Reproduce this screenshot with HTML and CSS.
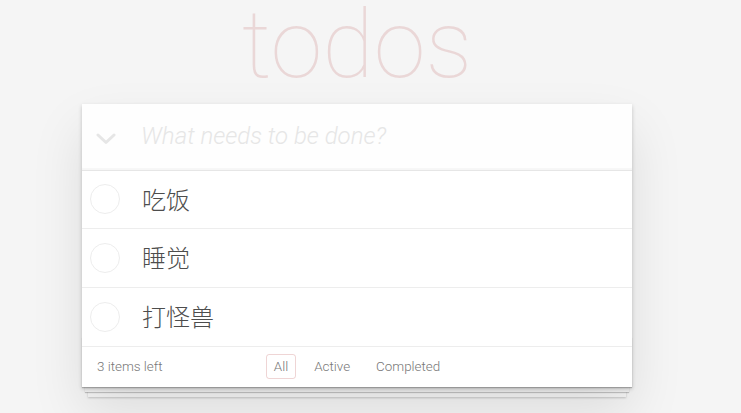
FILE: index.html
```html
<!DOCTYPE html>
<html lang="zh">
<head>
    <meta charset="UTF-8">
    <meta name="viewport" content="width=device-width, initial-scale=1.0">
    <title>Todos</title>
    <link rel="stylesheet" href="styles.css">
</head>
<body>
    <section class="todoapp">
        <h1 class="title">todos</h1>

        <div class="card">
            <div class="new-row">
                <span class="toggle-all">
                    <svg width="20" height="12" viewBox="0 0 20 12">
                        <polyline points="2,2 10,9.5 18,2" fill="none" stroke="#e6e6e6" stroke-width="3" stroke-linecap="round" stroke-linejoin="round"/>
                    </svg>
                </span>
                <input class="new-todo" type="text" placeholder="What needs to be done?">
            </div>

            <ul class="todo-list">
                <li class="todo"><span class="check"></span><label>吃饭</label></li>
                <li class="todo"><span class="check"></span><label>睡觉</label></li>
                <li class="todo"><span class="check"></span><label>打怪兽</label></li>
            </ul>

            <footer class="footer">
                <span class="todo-count">3 items left</span>
                <ul class="filters">
                    <li><a class="selected" href="#/">All</a></li>
                    <li><a href="#/active">Active</a></li>
                    <li><a href="#/completed">Completed</a></li>
                </ul>
                <span></span>
            </footer>
        </div>
    </section>
</body>
</html>
```

FILE: styles.css
```css
body {
    margin: 0;
    padding: 0;
    background-color: #f5f5f5;
    color: #4d4d4d;
    font-family: "Helvetica Neue", Roboto, "Noto Sans CJK SC", sans-serif;
    font-size: 14px;
    font-weight: 300;
    line-height: 1.4em;
}

.todoapp {
    width: 550px;
    margin: 0 0 40px 82px;
}

.title {
    margin: 0 0 14px 0;
    font-size: 94px;
    font-weight: 100;
    line-height: 90px;
    text-align: center;
    color: rgba(175, 47, 47, 0.15);
}

.card {
    position: relative;
    background: #fff;
    box-shadow: 0 2px 4px 0 rgba(0, 0, 0, 0.2),
                0 25px 50px 0 rgba(0, 0, 0, 0.1);
}

.new-row {
    display: flex;
    align-items: center;
    background: rgba(0, 0, 0, 0.003);
    box-shadow: inset 0 -2px 1px rgba(0, 0, 0, 0.03);
}

.toggle-all {
    display: flex;
    justify-content: center;
    align-items: center;
    width: 48px;
    padding-top: 5px;
}

.new-todo {
    flex: 1;
    min-width: 0;
    padding: 16px 16px 16px 11px;
    border: none;
    background: transparent;
    outline: none;
    font-family: inherit;
    font-size: 24px;
    font-weight: 300;
    line-height: 1.4em;
    color: #4d4d4d;
}

.new-todo::placeholder {
    font-style: italic;
    font-weight: 300;
    color: #e6e6e6;
}

.todo-list {
    margin: 0;
    padding: 0;
    list-style: none;
    border-top: 1px solid #e6e6e6;
}

.todo {
    display: flex;
    align-items: center;
    border-bottom: 1px solid #ededed;
}

.check {
    flex: none;
    width: 28px;
    height: 28px;
    margin-left: 8px;
    border: 1px solid #ededed;
    border-radius: 50%;
}

.todo label {
    padding: 14px 15px 15px 22px;
    font-family: "Noto Sans CJK SC", sans-serif;
    font-size: 24px;
    font-weight: 200;
    line-height: 1.2;
    color: #4d4d4d;
}

.footer {
    position: relative;
    display: grid;
    grid-template-columns: 1fr auto 1fr;
    align-items: center;
    height: 20px;
    padding: 10px 15px;
    font-size: 13.4px;
    color: #777;
}

.footer:before {
    content: '';
    position: absolute;
    right: 0;
    bottom: 0;
    left: 0;
    height: 50px;
    overflow: hidden;
    z-index: -1;
    box-shadow: 0 1px 1px rgba(0, 0, 0, 0.2),
                0 8px 0 -3px #f6f6f6,
                0 9px 1px -3px rgba(0, 0, 0, 0.2),
                0 16px 0 -6px #f6f6f6,
                0 17px 2px -6px rgba(0, 0, 0, 0.2);
}

.todo-count {
    text-align: left;
}

.filters {
    display: flex;
    align-items: center;
    gap: 4px;
    height: 20px;
    margin: 0;
    padding: 0;
    list-style: none;
}

.filters a {
    display: block;
    margin: 0 3px;
    padding: 3px 7px;
    line-height: 17px;
    color: inherit;
    text-decoration: none;
    border: 1px solid transparent;
    border-radius: 3px;
}

.filters a.selected {
    border-color: rgba(175, 47, 47, 0.2);
}
```
